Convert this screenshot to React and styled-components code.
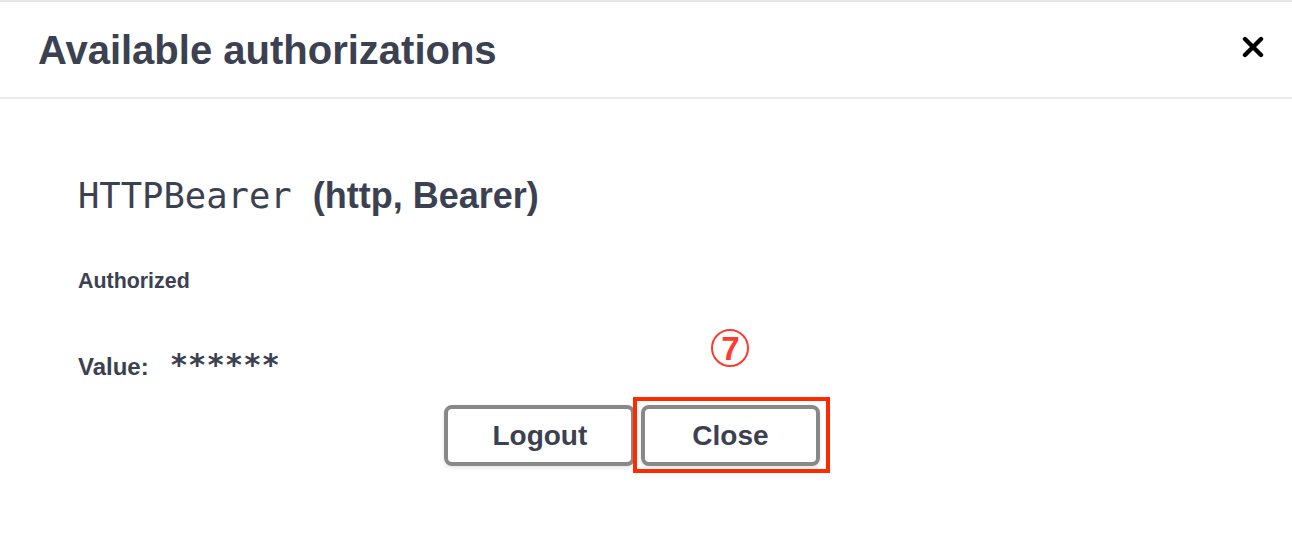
import React from "react";
import styled, { createGlobalStyle } from "styled-components";

const Global = createGlobalStyle`
  html, body { margin: 0; padding: 0; background: #ffffff; }
  body { font-family: "Liberation Sans", Arial, sans-serif; color: #3b4151; }
`;

const Modal = styled.div`
  width: 1292px;
  height: 546px;
  box-sizing: border-box;
  border-top: 2px solid #e6e6e6;
  background: #fff;
  overflow: hidden;
`;

const Header = styled.div`
  height: 97px;
  box-sizing: border-box;
  display: flex;
  align-items: center;
  justify-content: space-between;
  padding: 0 28px 0 38px;
  border-bottom: 2px solid #ebebeb;
`;

const Title = styled.h3`
  margin: 0;
  font-size: 40px;
  font-weight: 700;
  line-height: 46px;
  color: #3b4151;
`;

const CloseX = styled.button`
  border: 0;
  background: none;
  padding: 0;
  width: 22px;
  height: 22px;
  display: flex;
  align-items: center;
  justify-content: center;
  margin-top: -5px;
  cursor: pointer;
`;

const Body = styled.div`
  padding: 76px 78px 0 78px;
`;

const SchemeTitle = styled.h4`
  margin: 0;
  font-size: 36px;
  line-height: 42px;
  font-weight: 400;
  color: #3b4151;
`;

const Code = styled.code`
  font-family: "DejaVu Sans Mono", monospace;
  font-size: 35.5px;
  font-weight: 400;
  margin-right: 21px;
`;

const Kind = styled.span`
  font-family: "Liberation Sans", Arial, sans-serif;
  font-weight: 700;
`;

const Label = styled.div`
  margin-top: 51px;
  font-size: 21.4px;
  line-height: 26px;
  font-weight: 700;
`;

const ValueRow = styled.div`
  margin-top: 53px;
  display: flex;
  align-items: baseline;
  gap: 21px;
  line-height: 36px;
`;

const ValueLabel = styled.span`
  font-size: 24px;
  font-weight: 700;
`;

const Secret = styled.code`
  font-family: "DejaVu Sans Mono", monospace;
  font-size: 30.5px;
  font-weight: 700;
`;

const ButtonRow = styled.div`
  margin-top: 20px;
  display: flex;
  justify-content: center;
  gap: 6px;
`;

const Btn = styled.button`
  box-sizing: border-box;
  height: 61px;
  padding: 0 ${(p) => p.$pad}px;
  border: 4px solid #888888;
  border-radius: 8px;
  background: #fff;
  font-family: "Liberation Sans", Arial, sans-serif;
  font-size: 28px;
  font-weight: 700;
  color: #3b4151;
  box-shadow: 0 2px 4px rgba(0, 0, 0, 0.1);
  cursor: pointer;
`;

const Highlight = styled.div`
  position: relative;
  margin-right: 28px;
  display: flex;
`;

const RedBox = styled.div`
  position: absolute;
  left: -8px;
  right: -10px;
  top: -8px;
  bottom: -7px;
  border: 4px solid #ff2a00;
  pointer-events: none;
`;

const Marker = styled.span`
  position: absolute;
  left: 50%;
  bottom: 100%;
  margin-bottom: 38px;
  transform: translateX(-50%);
  box-sizing: border-box;
  width: 38px;
  height: 38px;
  border: 2px solid #ff3b30;
  border-radius: 50%;
  display: flex;
  align-items: center;
  justify-content: center;
  font-family: "Liberation Sans", Arial, sans-serif;
  font-weight: 700;
  font-size: 33px;
  line-height: 1;
  color: #ff3b30;
`;

export default function App() {
  return (
    <>
      <Global />
      <Modal>
        <Header>
          <Title>Available authorizations</Title>
          <CloseX aria-label="Close">
            <svg width="22" height="22" viewBox="0 0 22 22">
              <path
                d="M3 3 L19 19 M19 3 L3 19"
                stroke="#000"
                strokeWidth="4.4"
                strokeLinecap="round"
              />
            </svg>
          </CloseX>
        </Header>
        <Body>
          <SchemeTitle>
            <Code>HTTPBearer</Code>
            <Kind>(http, Bearer)</Kind>
          </SchemeTitle>
          <Label>Authorized</Label>
          <ValueRow>
            <ValueLabel>Value:</ValueLabel>
            <Secret>******</Secret>
          </ValueRow>
          <ButtonRow>
            <Btn $pad={44}>Logout</Btn>
            <Highlight>
              <Btn $pad={47}>Close</Btn>
              <RedBox />
              <Marker>7</Marker>
            </Highlight>
          </ButtonRow>
        </Body>
      </Modal>
    </>
  );
}
